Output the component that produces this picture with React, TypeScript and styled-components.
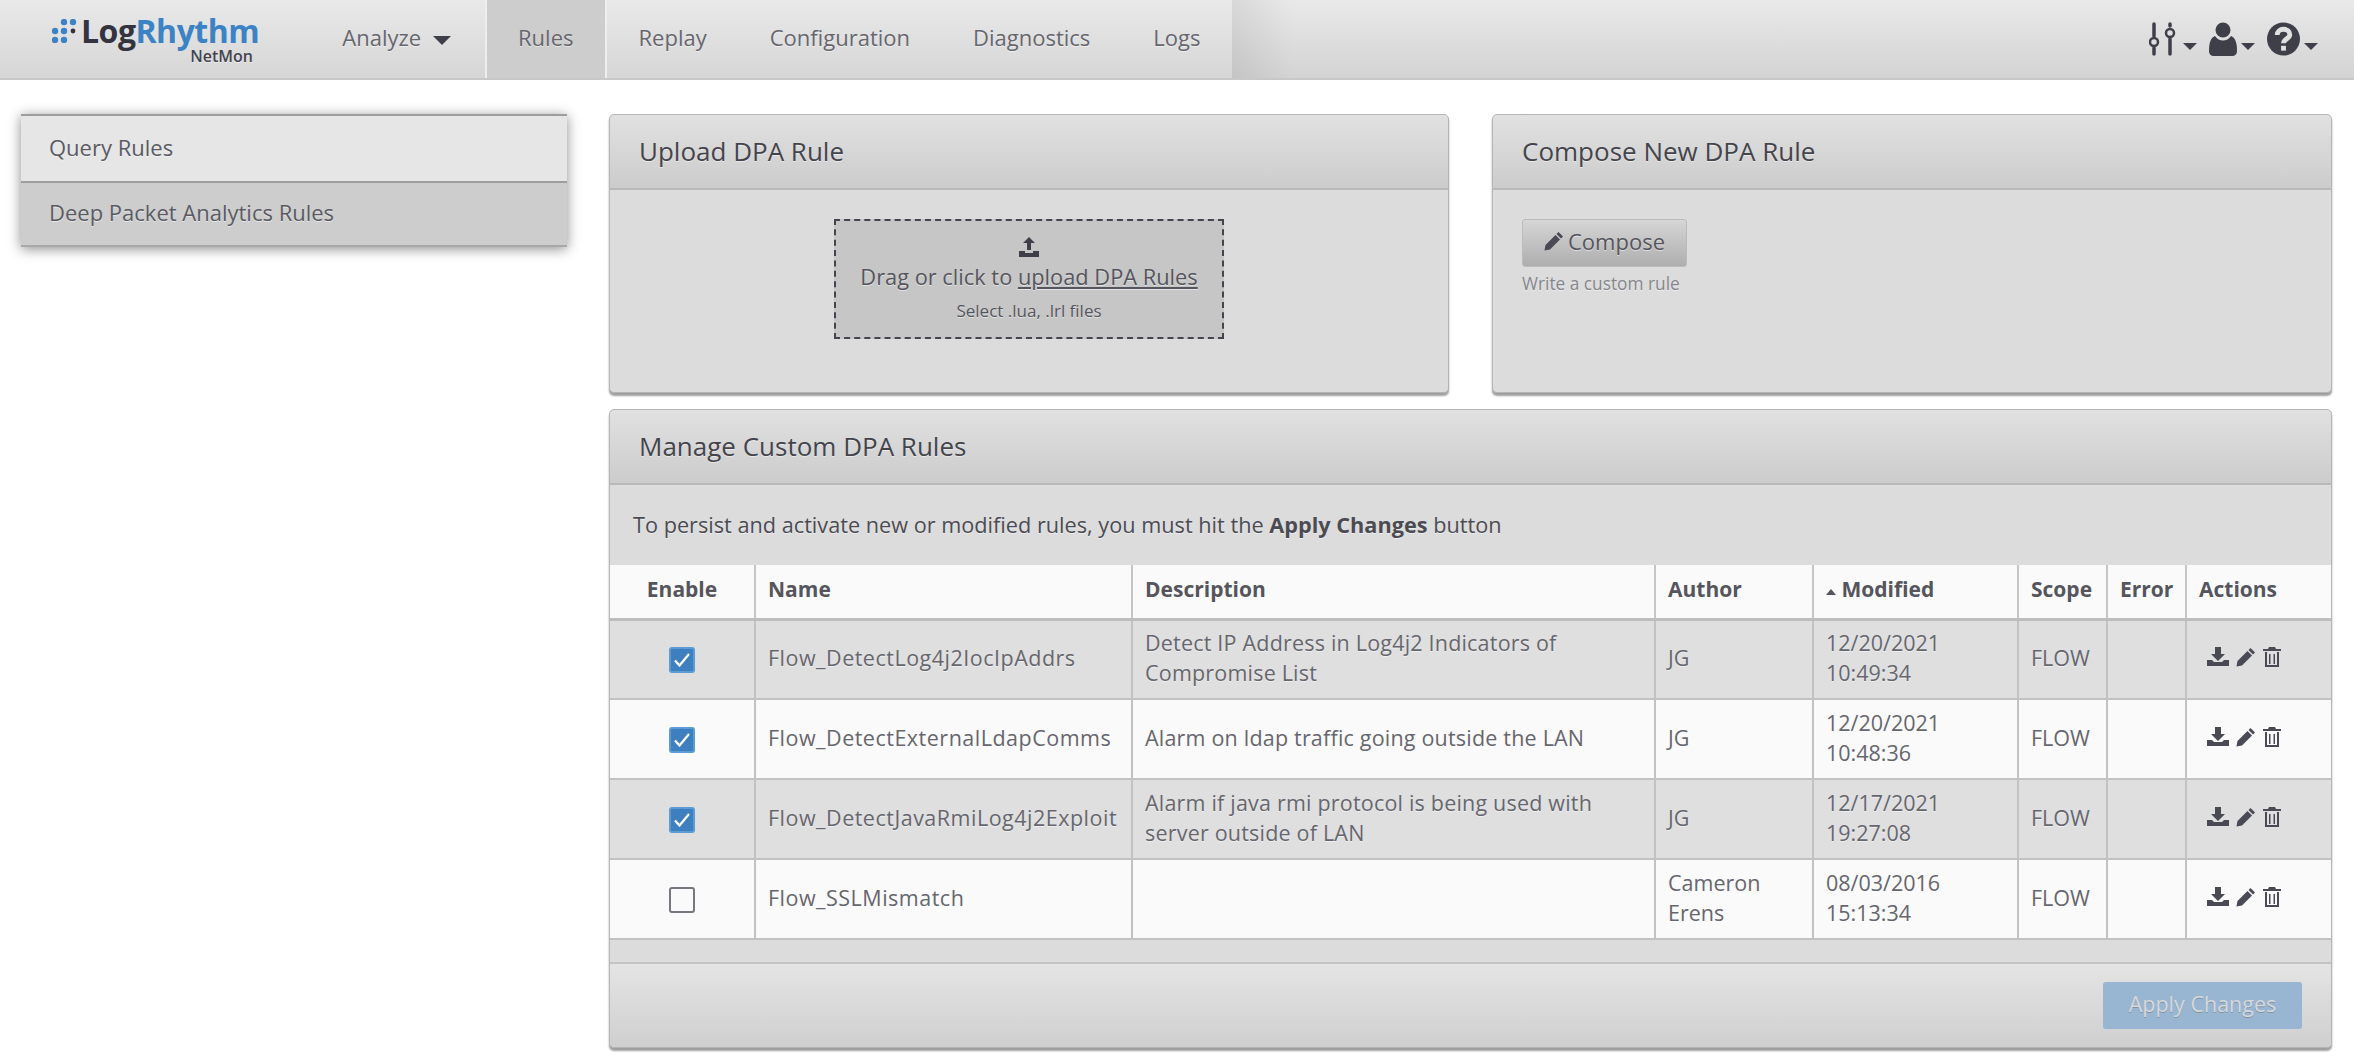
import React from 'react';
import styled, { createGlobalStyle } from 'styled-components';

const FONT = '"Open Sans", "Noto Sans", sans-serif';

const GlobalStyle = createGlobalStyle`
  html, body {
    margin: 0;
    padding: 0;
    background: #fff;
  }
  body {
    font-family: ${FONT};
    font-size: 21.5px;
    color: #55555d;
    text-shadow: 0 1px 0 rgba(255, 255, 255, 0.5);
  }
  * { box-sizing: border-box; }
`;

const rules = [
  { on: true, name: 'Flow_DetectLog4j2IocIpAddrs', desc: 'Detect IP Address in Log4j2 Indicators of Compromise List', author: 'JG', date: '12/20/2021', time: '10:49:34' },
  { on: true, name: 'Flow_DetectExternalLdapComms', desc: 'Alarm on ldap traffic going outside the LAN', author: 'JG', date: '12/20/2021', time: '10:48:36' },
  { on: true, name: 'Flow_DetectJavaRmiLog4j2Exploit', desc: 'Alarm if java rmi protocol is being used with server outside of LAN', author: 'JG', date: '12/17/2021', time: '19:27:08' },
  { on: false, name: 'Flow_SSLMismatch', desc: '', author: 'Cameron Erens', date: '08/03/2016', time: '15:13:34' },
];

const navLinks = ['Replay', 'Configuration', 'Diagnostics', 'Logs'];

const UploadIcon = () => (
  <svg width="22" height="22" viewBox="0 0 22 22" fill="#3f3f49">
    <path d="M11 1l6 6h-4v7H9V7H5z" />
    <path d="M1 15h6v2h8v-2h6v6H1z" />
  </svg>
);

const DownloadIcon = () => (
  <svg width="22" height="20" viewBox="0 0 22 20" fill="#4a4a54">
    <path d="M8 0h6v7h4l-7 7-7-7h4z" />
    <path d="M0 13h5l2 2h8l2-2h5v6H0z" />
  </svg>
);

const PencilIcon = ({ size = 20 }: { size?: number }) => (
  <svg width={size} height={size} viewBox="0 0 20 20" fill="#4a4a54">
    <path d="M14.500 1l4.500 4.500-2 2L12.500 3z" />
    <path d="M11.500 4l4.500 4.500L6 18.500 0.500 19.500 1.500 14z" />
  </svg>
);

const TrashIcon = () => (
  <svg width="18" height="20" viewBox="0 0 18 20">
    <path fill="#4a4a54" d="M6 0h6l1 2h5v2H0V2h5z" />
    <path fill="none" stroke="#4a4a54" strokeWidth="2" d="M3 5v14h12V5" />
    <path fill="#4a4a54" d="M6 7h1.500v10H6zM10.500 7H12v10h-1.500z" />
  </svg>
);

const SlidersIcon = () => (
  <svg width="30" height="34" viewBox="0 0 30 34" fill="none" stroke="#3f3f49">
    <path strokeWidth="3.500" strokeLinecap="round" d="M5 2v12M5 26v6M21 2v2M21 17v15" />
    <circle cx="5" cy="20" r="4" strokeWidth="2.500" />
    <circle cx="21" cy="11" r="4" strokeWidth="2.500" />
  </svg>
);

const UserIcon = () => (
  <svg width="28" height="34" viewBox="0 0 28 34" fill="#3f3f49">
    <circle cx="14" cy="8" r="7.500" />
    <path d="M6 14c2 3 5 4.500 8 4.500s6-1.500 8-4.500c4 1.500 6 6 6 15 0 3-2 5-5 5H5c-3 0-5-2-5-5 0-9 2-13.500 6-15z" />
  </svg>
);

const HelpIcon = () => (
  <svg width="33" height="34" viewBox="0 0 34 34">
    <circle cx="17" cy="17" r="17" fill="#3f3f49" />
    <path fill="none" stroke="#e0e0e0" strokeWidth="5" d="M10.500 13c0-4 3-6 6.500-6s6.500 2 6.500 5.500c0 4-6.500 4.500-6.500 9" />
    <rect x="14.500" y="24" width="5" height="5" fill="#e0e0e0" />
  </svg>
);

const LogoDots = () => (
  <svg width="27" height="24" viewBox="0 0 27 24">
    {[[3, 12], [3, 21], [12, 12], [12, 21], [21, 3], [12, 3]].map(([x, y]) => (
      <circle key={`${x}-${y}`} cx={x} cy={y} r="3.200" fill="#3b83c4" />
    ))}
    <circle cx="21" cy="12" r="2.400" fill="#34343e" />
  </svg>
);

const Check = ({ on }: { on: boolean }) => (
  <CheckBox $on={on}>
    {on && (
      <svg width="18" height="16" viewBox="0 0 18 16" fill="none" stroke="#fff" strokeWidth="2.200">
        <path d="M2 8.500l4.500 5L16 2" />
      </svg>
    )}
  </CheckBox>
);

export default function App() {
  return (
    <>
      <GlobalStyle />
      <Navbar>
        <NavLeft>
          <Brand>
            <LogoRow>
              <LogoDots />
              <LogoText>
                <span>Log</span>
                <LogoBlue>Rhythm</LogoBlue>
              </LogoText>
            </LogoRow>
            <LogoSub>NetMon</LogoSub>
          </Brand>
          <AnalyzeLink>
            Analyze <Caret $size={9} />
          </AnalyzeLink>
          <NavLink $active>Rules</NavLink>
          {navLinks.map((link) => (
            <NavLink key={link}>{link}</NavLink>
          ))}
        </NavLeft>
        <NavRight>
          <NavIcon>
            <SlidersIcon />
            <Caret $size={7} />
          </NavIcon>
          <NavIcon>
            <UserIcon />
            <Caret $size={7} />
          </NavIcon>
          <NavIcon>
            <HelpIcon />
            <Caret $size={7} />
          </NavIcon>
        </NavRight>
      </Navbar>
      <Page>
        <Sidebar>
          <SideItem>Query Rules</SideItem>
          <SideItem $active>Deep Packet Analytics Rules</SideItem>
        </Sidebar>
        <Content>
          <Panel>
            <PanelTitle>Upload DPA Rule</PanelTitle>
            <UploadBody>
              <DropZone>
                <UploadIcon />
                <DropText>
                  Drag or click to <u>upload DPA Rules</u>
                </DropText>
                <DropHint>Select .lua, .lrl files</DropHint>
              </DropZone>
            </UploadBody>
          </Panel>
          <Panel>
            <PanelTitle>Compose New DPA Rule</PanelTitle>
            <ComposeBody>
              <ComposeButton>
                <PencilIcon size={20} /> Compose
              </ComposeButton>
              <HelpText>Write a custom rule</HelpText>
            </ComposeBody>
          </Panel>
          <WidePanel>
            <PanelTitle>Manage Custom DPA Rules</PanelTitle>
            <Notice>
              To persist and activate new or modified rules, you must hit the <b>Apply Changes</b> button
            </Notice>
            <RulesTable>
              <colgroup>
                <col width="145" />
                <col width="377" />
                <col width="523" />
                <col width="158" />
                <col width="205" />
                <col width="89" />
                <col width="79" />
                <col width="145" />
              </colgroup>
              <thead>
                <tr>
                  <HeadCell $center>Enable</HeadCell>
                  <HeadCell>Name</HeadCell>
                  <HeadCell>Description</HeadCell>
                  <HeadCell>Author</HeadCell>
                  <HeadCell>
                    <SortCaret /> Modified
                  </HeadCell>
                  <HeadCell>Scope</HeadCell>
                  <HeadCell>Error</HeadCell>
                  <HeadCell>Actions</HeadCell>
                </tr>
              </thead>
              <tbody>
                {rules.map((rule) => (
                  <Row key={rule.name}>
                    <Cell $center>
                      <Check on={rule.on} />
                    </Cell>
                    <NameCell>{rule.name}</NameCell>
                    <DescCell>{rule.desc}</DescCell>
                    <Cell>{rule.author}</Cell>
                    <Cell>
                      {rule.date}
                      <br />
                      {rule.time}
                    </Cell>
                    <Cell>FLOW</Cell>
                    <Cell />
                    <Cell>
                      <Actions>
                        <DownloadIcon />
                        <PencilIcon />
                        <TrashIcon />
                      </Actions>
                    </Cell>
                  </Row>
                ))}
              </tbody>
            </RulesTable>
            <Spacer />
            <PanelFooter>
              <ApplyButton>Apply Changes</ApplyButton>
            </PanelFooter>
          </WidePanel>
        </Content>
      </Page>
    </>
  );
}

const Navbar = styled.header`
  height: 80px;
  display: flex;
  justify-content: space-between;
  background: linear-gradient(#e9e9e9, #d3d3d3);
  border-bottom: 2px solid #c8c8c8;
`;

const NavLeft = styled.nav`
  position: relative;
  width: 1232px;
  display: flex;
  background: linear-gradient(#e9e9e9, #d6d6d6);
  &::after {
    content: '';
    position: absolute;
    top: 0;
    bottom: 0;
    left: 100%;
    width: 60px;
    background: linear-gradient(to right, rgba(0, 0, 0, 0.07), rgba(0, 0, 0, 0));
  }
`;

const Brand = styled.div`
  width: 344px;
  padding: 15px 0 0 52px;
`;

const LogoRow = styled.div`
  display: flex;
  align-items: center;
  gap: 2px;
  height: 32px;
`;

const LogoText = styled.div`
  display: flex;
  font-size: 32px;
  font-weight: 700;
  line-height: 32px;
  letter-spacing: -0.5px;
  color: #34343e;
  text-shadow: none;
  span {
    display: block;
    height: 32px;
  }
`;

const LogoBlue = styled.span`
  color: #3b83c4;
`;

const LogoSub = styled.div`
  width: 201px;
  margin-top: 2px;
  text-align: right;
  font-size: 16px;
  font-weight: 600;
  line-height: 14px;
  color: #44444e;
`;

const AnalyzeLink = styled.a`
  width: 143px;
  line-height: 75px;
  color: #66666e;
  font-size: 22px;
`;

const Caret = styled.span<{ $size: number }>`
  display: inline-block;
  vertical-align: middle;
  border-top: ${(p) => p.$size}px solid #3f3f49;
  border-left: ${(p) => p.$size}px solid transparent;
  border-right: ${(p) => p.$size}px solid transparent;
  margin-left: 6px;
`;

const NavLink = styled.a<{ $active?: boolean }>`
  padding: 0 31.5px;
  line-height: 75px;
  color: #66666e;
  font-size: 22px;
  border-left: 2px solid #eee;
  background: ${(p) => (p.$active ? '#cdcdcd' : 'transparent')};
  & + & {
    border-left: ${(p) => (p.$active ? '2px solid #eee' : 'none')};
  }
  &:nth-child(4) {
    border-left: 2px solid #eee;
  }
`;

const NavRight = styled.div`
  display: flex;
  align-items: center;
  gap: 12px;
  padding-right: 36px;
`;

const NavIcon = styled.span`
  display: flex;
  align-items: flex-end;
  height: 34px;
  & > span {
    margin: 0 0 6px 4px;
  }
`;

const Page = styled.main`
  display: flex;
  align-items: flex-start;
  padding: 34px 22px 10px 21px;
`;

const Sidebar = styled.aside`
  width: 546px;
  flex: none;
  margin-right: 42px;
  box-shadow: 0 2px 12px rgba(0, 0, 0, 0.45);
`;

const SideItem = styled.a<{ $active?: boolean }>`
  display: block;
  height: ${(p) => (p.$active ? 66 : 67)}px;
  padding-left: 28px;
  line-height: ${(p) => (p.$active ? 58 : 62)}px;
  color: #5a5a62;
  font-size: 22px;
  background: ${(p) => (p.$active ? '#cdcdcd' : '#e6e6e6')};
  border-top: 2px solid #9d9d9d;
  border-bottom: ${(p) => (p.$active ? '2px solid #a8a8a8' : 'none')};
`;

const Content = styled.div`
  flex: 1;
  display: grid;
  grid-template-columns: 840px 840px;
  column-gap: 43px;
  row-gap: 16px;
`;

const Panel = styled.section`
  height: 279px;
  display: flex;
  flex-direction: column;
  background: #dcdcdc;
  border: 1px solid #b5b5b5;
  border-radius: 5px;
  box-shadow: 0 3px 2px rgba(0, 0, 0, 0.38);
`;

const WidePanel = styled(Panel)`
  grid-column: 1 / 3;
  height: 639px;
`;

const PanelTitle = styled.h3`
  margin: 0;
  height: 75px;
  flex: none;
  padding-left: 29px;
  line-height: 72px;
  font-size: 26px;
  font-weight: 400;
  color: #44444c;
  background: linear-gradient(#e1e1e1, #cccccc);
  border-bottom: 2px solid #b9b9b9;
  border-radius: 5px 5px 0 0;
`;

const UploadBody = styled.div`
  display: flex;
  justify-content: center;
  padding-top: 29px;
`;

const DropZone = styled.div`
  width: 390px;
  height: 120px;
  display: flex;
  flex-direction: column;
  align-items: center;
  padding-top: 15px;
  background: #c6c6c6;
  border: 2px dashed #44444c;
`;

const DropText = styled.div`
  font-size: 21.800px;
  line-height: 30px;
  margin-top: 4px;
  white-space: nowrap;
`;

const DropHint = styled.div`
  font-size: 17px;
  line-height: 30px;
  margin-top: 4px;
`;

const ComposeBody = styled.div`
  padding: 29px 0 0 29px;
`;

const ComposeButton = styled.button`
  width: 165px;
  height: 48px;
  display: flex;
  align-items: center;
  justify-content: center;
  gap: 4px;
  padding: 0 0 5px;
  font-family: ${FONT};
  font-size: 22px;
  color: #55555d;
  text-shadow: 0 1px 0 rgba(255, 255, 255, 0.5);
  background: linear-gradient(#d6d6d6, #aeaeae);
  border: 1px solid #bcbcbc;
  border-radius: 3px;
`;

const HelpText = styled.div`
  margin-top: 7px;
  font-size: 17.300px;
  line-height: 20px;
  color: #85858b;
`;

const Notice = styled.div`
  height: 80px;
  flex: none;
  padding: 26px 0 0 23px;
  font-size: 21.700px;
  line-height: 28px;
  color: #4b4b53;
  b {
    font-weight: 700;
  }
`;

const RulesTable = styled.table`
  width: 1721px;
  flex: none;
  table-layout: fixed;
  border-collapse: collapse;
  font-size: 21.500px;
  line-height: 30px;
`;

const HeadCell = styled.th<{ $center?: boolean }>`
  height: 54px;
  padding: 0 12px 4px;
  background: #fafafa;
  font-weight: 700;
  font-size: 21px;
  color: #55555d;
  text-align: ${(p) => (p.$center ? 'center' : 'left')};
  border-left: 2px solid #c6c6c6;
  border-bottom: 3px solid #bdbdbd;
  white-space: nowrap;
  &:first-child {
    border-left: none;
  }
`;

const SortCaret = styled.span`
  display: inline-block;
  vertical-align: middle;
  border-bottom: 6px solid #55555d;
  border-left: 5px solid transparent;
  border-right: 5px solid transparent;
`;

const Row = styled.tr`
  background: #fafafa;
  &:nth-child(odd) {
    background: #dfdfdf;
  }
`;

const Cell = styled.td<{ $center?: boolean }>`
  height: 80px;
  padding: 0 12px 3px;
  color: #66666e;
  text-align: ${(p) => (p.$center ? 'center' : 'left')};
  border-left: 2px solid #c2c2c2;
  border-bottom: 2px solid #c2c2c2;
  &:first-child {
    border-left: none;
  }
`;

const NameCell = styled(Cell)`
  letter-spacing: 0.5px;
`;

const DescCell = styled(Cell)`
  letter-spacing: 0.2px;
`;

const CheckBox = styled.span<{ $on: boolean }>`
  width: 26px;
  height: 26px;
  display: inline-flex;
  align-items: center;
  justify-content: center;
  vertical-align: middle;
  border-radius: 3px;
  background: ${(p) => (p.$on ? '#3d7fbf' : '#fafafa')};
  border: 2px solid ${(p) => (p.$on ? '#5b9bd5' : '#77777d')};
`;

const Actions = styled.div`
  display: flex;
  align-items: center;
  gap: 7px;
  margin: -2px 0 0 8px;
`;

const Spacer = styled.div`
  height: 24px;
  flex: none;
  border-bottom: 2px solid #c4c4c4;
`;

const PanelFooter = styled.footer`
  flex: 1;
  display: flex;
  justify-content: flex-end;
  align-items: flex-start;
  padding: 18px 29px 0 0;
  background: linear-gradient(#e4e4e4, #cfcfcf);
  border-radius: 0 0 5px 5px;
`;

const ApplyButton = styled.button`
  width: 199px;
  height: 47px;
  padding: 0 0 5px;
  font-family: ${FONT};
  font-size: 21.500px;
  color: #d6d8da;
  text-shadow: 0 1px 0 rgba(90, 90, 90, 0.4);
  background: #98b6d2;
  border: none;
  border-radius: 3px;
`;
